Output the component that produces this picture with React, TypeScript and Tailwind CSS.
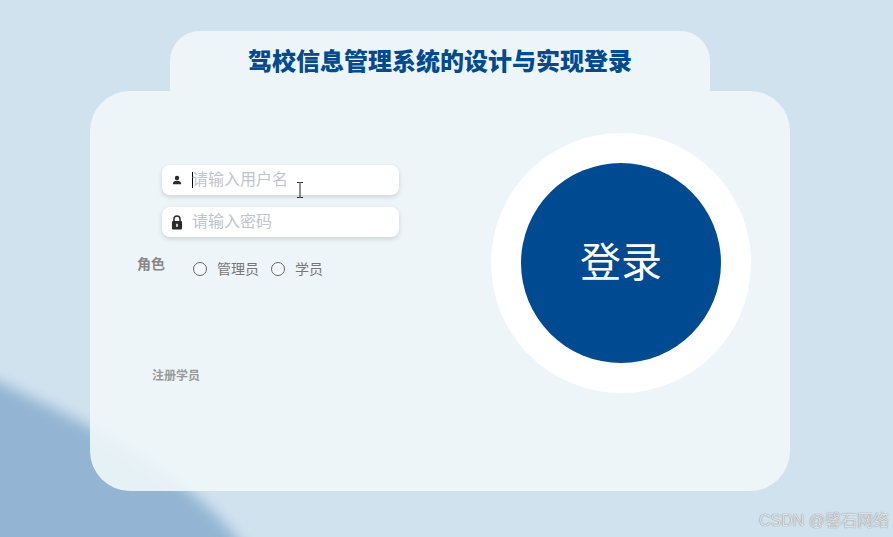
// App.tsx - driving school login page
import React from "react";

const FONT = "font-['Liberation_Sans','Noto_Sans_CJK_SC',sans-serif]";

// ── Small icons ───────────────────────────────────────────────────────────────
const UserIcon = () => (
  <svg width="10" height="10" viewBox="0 0 10 10" fill="#2b2b2b">
    <circle cx="5" cy="3" r="2.2" />
    <path d="M.8 9.2c0-2.4 1.7-3.4 4.2-3.4s4.2 1 4.2 3.4z" />
  </svg>
);

const LockIcon = () => (
  <svg width="12" height="15" viewBox="0 0 12 15">
    <path d="M3 7V4a3 3 0 0 1 6 0v3" fill="none" stroke="#2b2b2b" strokeWidth="1.5" />
    <rect x="1" y="6" width="10" height="8.5" rx="1" fill="#2b2b2b" />
    <rect x="5.2" y="8.8" width="1.6" height="3" fill="#fff" />
  </svg>
);

const IBeam = () => (
  <svg className="absolute left-[295px] top-[182px]" width="10" height="16" viewBox="0 0 10 16" fill="none" stroke="#222" strokeWidth="1">
    <path d="M2 .5h2.5L5 1l.5-.5H8M5 1v14M2 15.5h2.5L5 15l.5.5H8" />
  </svg>
);

// ── Input row ─────────────────────────────────────────────────────────────────
const Field: React.FC<{ icon: React.ReactNode; placeholder: string; caret?: boolean }> = ({ icon, placeholder, caret }) => (
  <div className="flex h-[30px] w-[237px] items-center rounded-[8px] bg-white shadow-[0_2px_5px_rgba(0,0,0,0.14)]">
    <span className="flex w-[30px] justify-center">{icon}</span>
    {caret && <span className="mr-[-1px] h-[16px] w-px bg-black" />}
    <span className="text-[16px] text-[#c0c4cc]">{placeholder}</span>
  </div>
);

const Radio: React.FC<{ label: string }> = ({ label }) => (
  <div className="flex items-center gap-[10px]">
    <span className="h-[14px] w-[14px] rounded-full border border-[#666] bg-white/40" />
    <span className="text-[14px] leading-[18px] text-[#777]">{label}</span>
  </div>
);

export default function App() {
  return (
    <div className={`relative h-[537px] w-[893px] overflow-hidden bg-[#d1e2ef] ${FONT}`}>
      {/* background shape */}
      <svg className="absolute inset-0" width="893" height="537" viewBox="0 0 893 537">
        <defs>
          <filter id="soft" x="-20%" y="-20%" width="140%" height="140%">
            <feGaussianBlur stdDeviation="7" />
          </filter>
        </defs>
        <path d="M-30 368C40 402 110 432 170 476C205 501 232 528 262 570L-30 570Z" fill="#93b5d3" filter="url(#soft)" />
      </svg>

      <div className="relative ml-[90px] flex w-[700px] flex-col items-center pt-[31px]">
        {/* title tab */}
        <div className="flex h-[60px] w-[540px] items-center justify-center rounded-t-[30px] bg-[#eff7fa]/90 pt-[2px]">
          <h1 className="text-[24px] font-black text-[#004a8f]">驾校信息管理系统的设计与实现登录</h1>
        </div>

        {/* main card */}
        <div className="flex h-[400px] w-[700px] justify-between rounded-[40px] bg-[#eff7fa]/90 pl-[47px] pr-[39px] pt-[42px]">
          <div className="flex flex-col">
            <div className="ml-[25px] mt-[32px] flex flex-col gap-[12px]">
              <Field icon={<UserIcon />} placeholder="请输入用户名" caret />
              <Field icon={<LockIcon />} placeholder="请输入密码" />
            </div>
            <div className="mt-[17px] flex items-start">
              <span className="w-[56px] text-[14px] font-bold leading-[20px] text-[#888]">角色</span>
              <div className="mt-[6px] flex gap-[12px]">
                <Radio label="管理员" />
                <Radio label="学员" />
              </div>
            </div>
            <span className="ml-[15px] mt-[89px] text-[12px] font-bold text-[#999]">注册学员</span>
          </div>

          {/* login button */}
          <div className="flex h-[260px] w-[260px] items-center justify-center rounded-full bg-white">
            <div className="flex h-[200px] w-[200px] items-center justify-center rounded-full bg-[#004a92] pt-[2px] text-[41px] text-white">
              登录
            </div>
          </div>
        </div>
      </div>

      <IBeam />

      {/* image watermark */}
      <span className="absolute bottom-[6px] right-[4px] text-[16px] leading-[20px] text-white/80 [text-shadow:0_0_1px_rgba(70,70,70,0.9)]">
        CSDN @馨石网络
      </span>
    </div>
  );
}
